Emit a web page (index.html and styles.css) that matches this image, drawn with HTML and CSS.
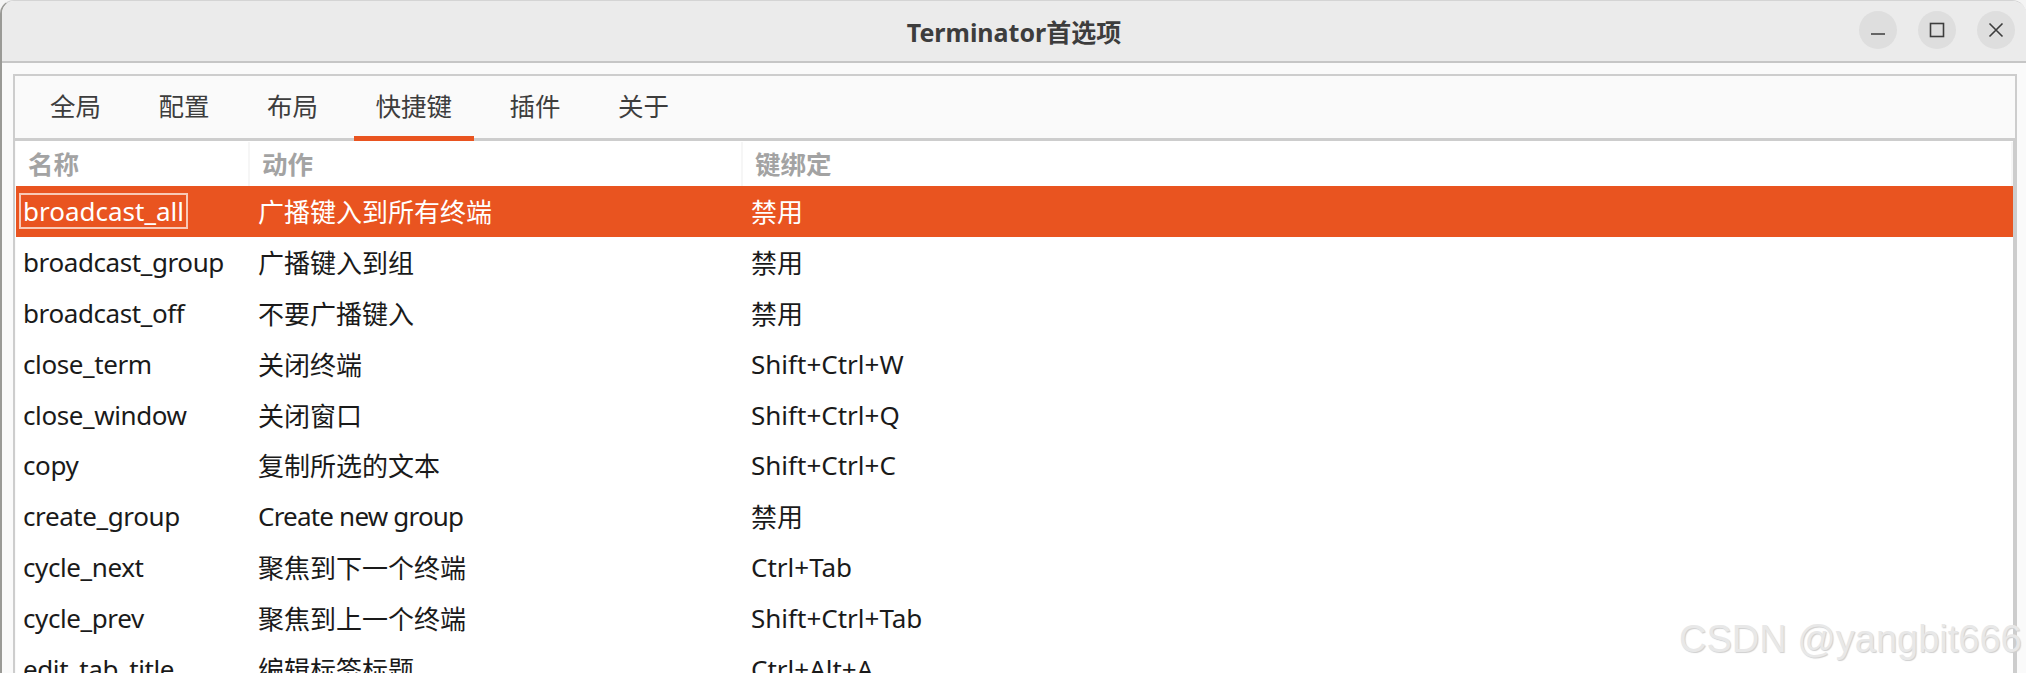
FILE: index.html
```html
<!DOCTYPE html>
<html lang="zh-CN">
<head>
  <meta charset="UTF-8" />
  <title>Terminator首选项</title>
  <link rel="stylesheet" href="styles.css">
</head>
<body>
<div class="window">
  <header class="titlebar">
    <h1>Terminator首选项</h1>
    <div class="win-buttons">
      <button class="win-btn" aria-label="Minimize">
        <svg viewBox="0 0 16 16" width="16" height="16"><path d="M1 12h14" stroke="#3d3d3d" stroke-width="1.6" fill="none"/></svg>
      </button>
      <button class="win-btn" aria-label="Maximize">
        <svg viewBox="0 0 16 16" width="16" height="16"><rect x="1.5" y="1.5" width="13" height="13" stroke="#3d3d3d" stroke-width="1.6" fill="none"/></svg>
      </button>
      <button class="win-btn" aria-label="Close">
        <svg viewBox="0 0 16 16" width="16" height="16"><path d="M1.5 1.5l13 13M14.5 1.5l-13 13" stroke="#3d3d3d" stroke-width="1.6" fill="none"/></svg>
      </button>
    </div>
  </header>
  <main class="content">
    <div class="notebook">
      <nav class="tabs">
        <a>全局</a>
        <a>配置</a>
        <a>布局</a>
        <a class="active">快捷键</a>
        <a>插件</a>
        <a>关于</a>
      </nav>
      <div class="list">
        <div class="row head">
          <span>名称</span>
          <span>动作</span>
          <span>键绑定</span>
        </div>
        <div class="row selected">
          <span><b class="focus-box">broadcast_all</b></span>
          <span>广播键入到所有终端</span>
          <span>禁用</span>
        </div>
        <div class="row"><span>broadcast_group</span><span>广播键入到组</span><span>禁用</span></div>
        <div class="row"><span>broadcast_off</span><span>不要广播键入</span><span>禁用</span></div>
        <div class="row"><span>close_term</span><span>关闭终端</span><span>Shift+Ctrl+W</span></div>
        <div class="row"><span>close_window</span><span>关闭窗口</span><span>Shift+Ctrl+Q</span></div>
        <div class="row"><span>copy</span><span>复制所选的文本</span><span>Shift+Ctrl+C</span></div>
        <div class="row"><span>create_group</span><span class="narrow">Create new group</span><span>禁用</span></div>
        <div class="row"><span>cycle_next</span><span>聚焦到下一个终端</span><span>Ctrl+Tab</span></div>
        <div class="row"><span>cycle_prev</span><span>聚焦到上一个终端</span><span>Shift+Ctrl+Tab</span></div>
        <div class="row"><span>edit_tab_title</span><span>编辑标签标题</span><span>Ctrl+Alt+A</span></div>
      </div>
    </div>
  </main>
</div>
<div class="watermark">CSDN @yangbit666</div>
</body>
</html>
```
FILE: styles.css
```css
html, body {
  height: 100%;
}
body {
  margin: 0;
  background: #f4f4f4;
  font-family: 'Noto Sans', 'Noto Sans CJK SC', sans-serif;
  color: #1a1a1a;
  overflow: hidden;
}
.window {
  height: 673px;
  box-sizing: border-box;
  background: #fafafa;
  border-left: 2px solid #9a9a96;
  border-top: 1px solid #d4d4d4;
  border-radius: 14px 14px 0 0;
  overflow: hidden;
}
.titlebar {
  height: 60px;
  background: #ebebeb;
  border-bottom: 2px solid #c6c6c6;
  display: flex;
  align-items: center;
  justify-content: center;
  position: relative;
}
.titlebar h1 {
  margin: 0;
  font-size: 25px;
  font-weight: 700;
  color: #3d3d3d;
}
.win-buttons {
  position: absolute;
  top: 10px;
  right: 11px;
  display: flex;
  gap: 21px;
}
.win-btn {
  width: 38px;
  height: 38px;
  padding: 0;
  border: none;
  border-radius: 50%;
  background: #dedede;
  display: flex;
  align-items: center;
  justify-content: center;
}
.content {
  padding: 11px 9px 0 11px;
}
.notebook {
  border: 2px solid #cdcdcd;
  border-bottom: none;
}
.tabs {
  height: 62px;
  display: flex;
  gap: 14.5px;
  padding-left: 13.5px;
  background: #fafafa;
  border-bottom: 3px solid #cdcdcd;
}
.tabs a {
  padding: 0 21.5px;
  margin-bottom: -3px;
  font-size: 25.5px;
  line-height: 60px;
  color: #3d3d3d;
  border-bottom: 5px solid transparent;
}
.tabs a.active {
  border-bottom-color: #e95420;
}
.list {
  background: white;
  margin-left: 1px;
  border-right: 2px solid #cdcdcd;
  height: 540px;
}
.row {
  display: grid;
  grid-template-columns: 234px 493px 1fr;
  height: 50.8px;
  align-items: center;
  font-size: 26px;
  white-space: nowrap;
}
.row span {
  padding-left: 8px;
}
.row span:first-child {
  padding-left: 7px;
  letter-spacing: -0.4px;
}
.row .narrow {
  letter-spacing: -0.8px;
}
.head {
  height: 45px;
  font-size: 25.5px;
  font-weight: 700;
  color: #a3a3a3;
}
.row.head span {
  padding-left: 12px;
  line-height: 44px;
  letter-spacing: 0;
  border-right: 2px solid #f6f6f6;
}
.selected {
  background: #e95420;
  color: white;
}
.focus-box {
  font-weight: 400;
  letter-spacing: 0;
  display: inline-block;
  margin-left: -4px;
  padding: 0 2px;
  border: 2px solid #f8c9b6;
  line-height: 32px;
}
.watermark {
  position: absolute;
  left: 1679px;
  top: 618px;
  font-family: 'Liberation Sans', sans-serif;
  font-size: 38px;
  color: #e8e8e8;
  text-shadow: 1px 1px 1px #cfcfcf;
}
```
